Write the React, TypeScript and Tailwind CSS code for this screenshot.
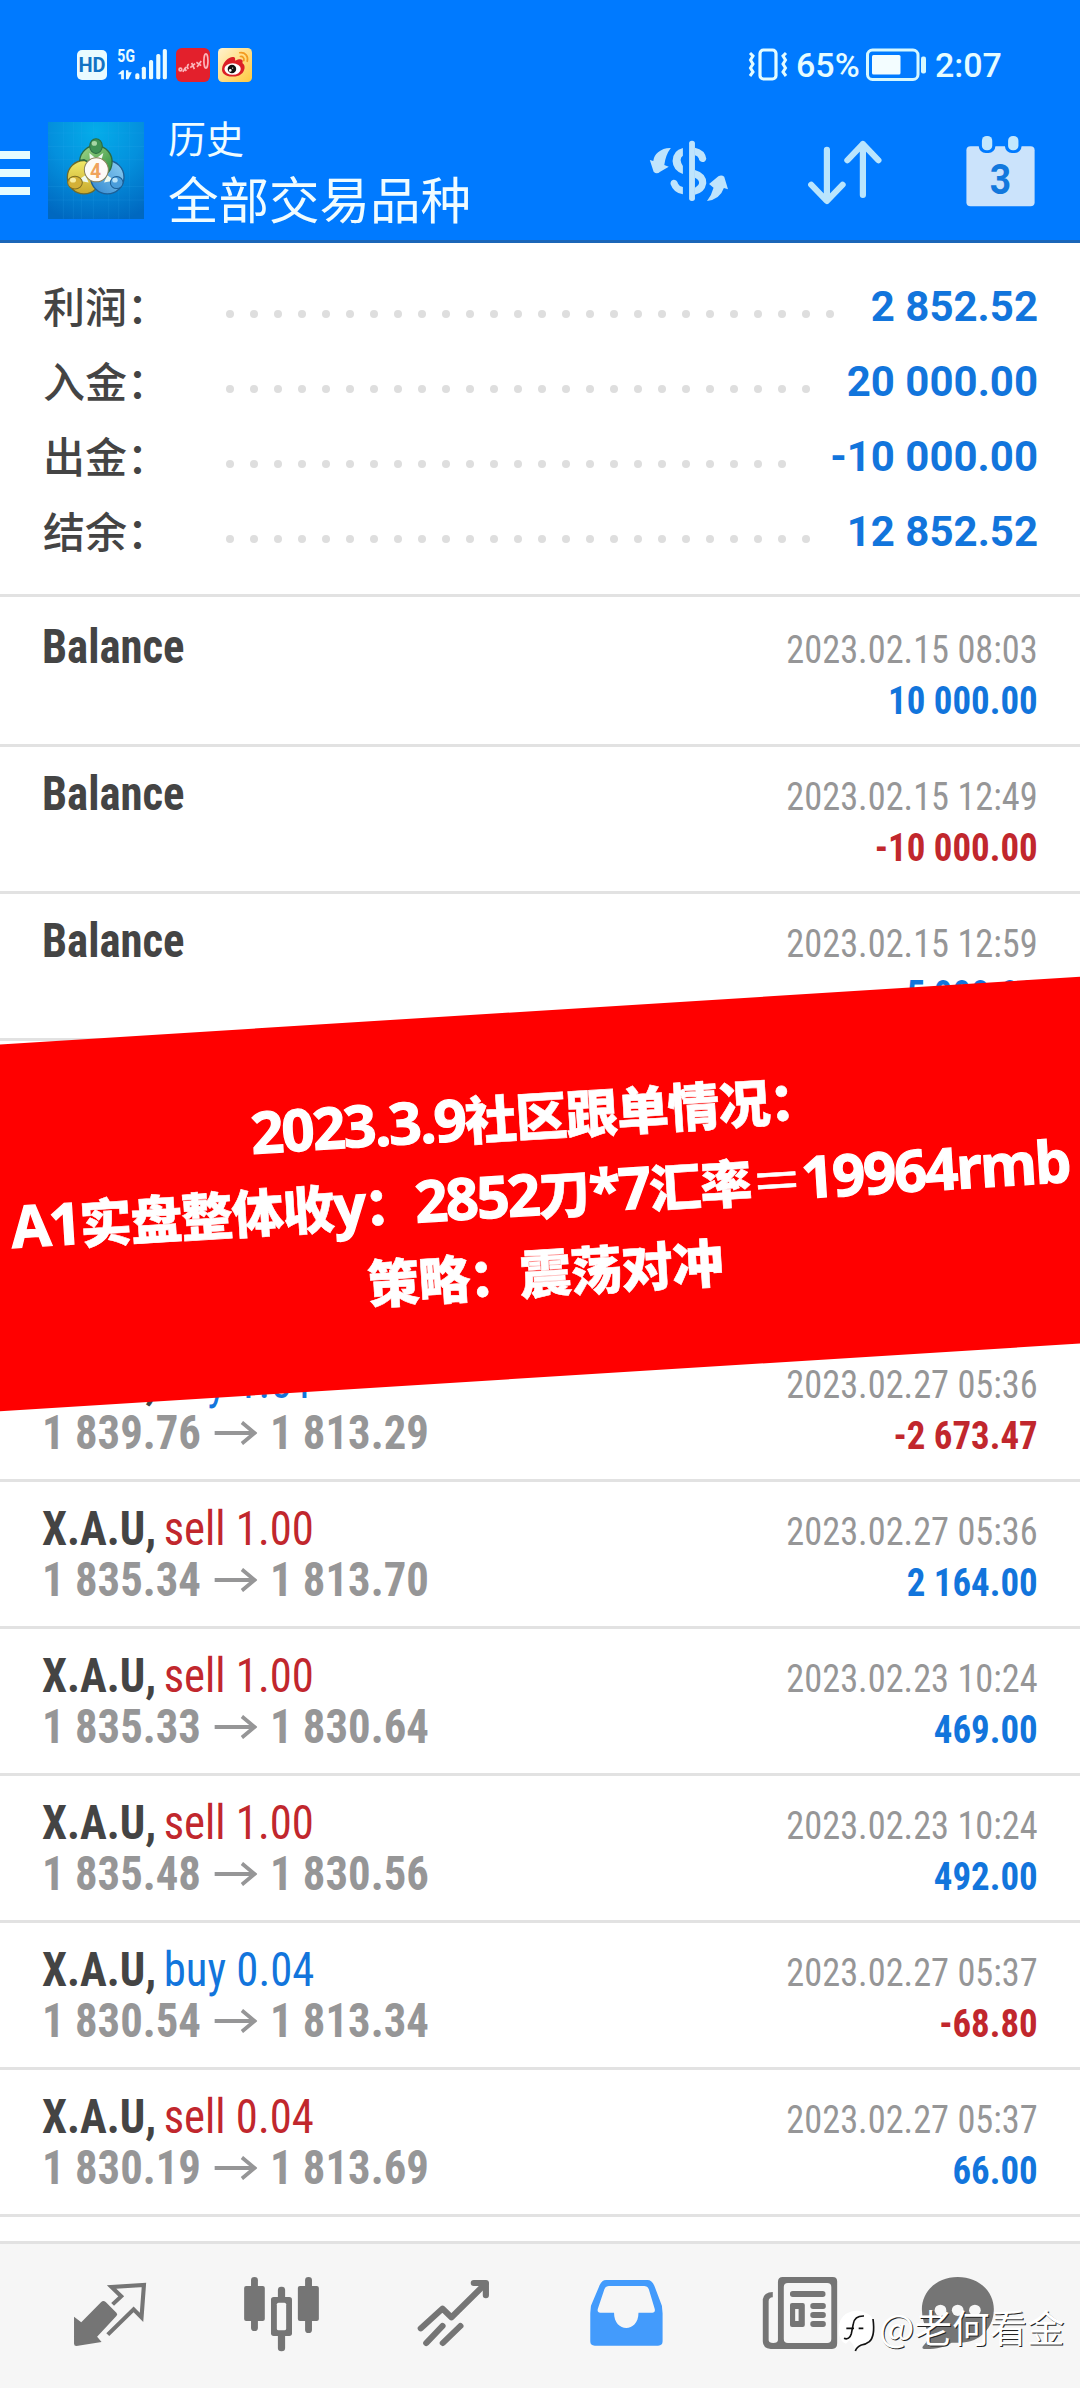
import type { ReactNode } from "react";

type Entry = {
  symbol?: string;
  action?: "buy" | "sell";
  volume?: string;
  open?: string;
  close?: string;
  time: string;
  amount: string;
};

const summary = [
  { label: "利润：", value: "2 852.52", dots: 26 },
  { label: "入金：", value: "20 000.00", dots: 25 },
  { label: "出金：", value: "-10 000.00", dots: 24 },
  { label: "结余：", value: "12 852.52", dots: 25 },
];

const entries: Entry[] = [
  { time: "2023.02.15 08:03", amount: "10 000.00" },
  { time: "2023.02.15 12:49", amount: "-10 000.00" },
  { time: "2023.02.15 12:59", amount: "5 000.00" },
  { time: "2023.02.15 13:02", amount: "5 000.00" },
  { time: "2023.02.15 13:05", amount: "10 000.00" },
  { symbol: "X.A.U,", action: "buy", volume: "1.01", open: "1 839.76", close: "1 813.29", time: "2023.02.27 05:36", amount: "-2 673.47" },
  { symbol: "X.A.U,", action: "sell", volume: "1.00", open: "1 835.34", close: "1 813.70", time: "2023.02.27 05:36", amount: "2 164.00" },
  { symbol: "X.A.U,", action: "sell", volume: "1.00", open: "1 835.33", close: "1 830.64", time: "2023.02.23 10:24", amount: "469.00" },
  { symbol: "X.A.U,", action: "sell", volume: "1.00", open: "1 835.48", close: "1 830.56", time: "2023.02.23 10:24", amount: "492.00" },
  { symbol: "X.A.U,", action: "buy", volume: "0.04", open: "1 830.54", close: "1 813.34", time: "2023.02.27 05:37", amount: "-68.80" },
  { symbol: "X.A.U,", action: "sell", volume: "0.04", open: "1 830.19", close: "1 813.69", time: "2023.02.27 05:37", amount: "66.00" },
];

function SignalIcon() {
  return (
    <svg className="ml-[9px] h-[50px] w-[54px]" viewBox="337 30 157 150" preserveAspectRatio="none" fill="#e9fbff">
      <text x="341" y="97" fontSize="54" fontWeight="700" textLength="51" lengthAdjust="spacingAndGlyphs" className="font-[Roboto]">5G</text>
      <path d="M342 133 L355 121 H360 V148 H352 V133 Z M366 121 H373 V127 H383 L373 148 H366 Z" />
      {[[393, 130], [412, 110], [433, 90], [454, 72], [473, 57]].map(([x, y]) => (
        <rect key={x} x={x} y={y} width="12" height={148 - y} rx="5" />
      ))}
    </svg>
  );
}

function StockAppIcon() {
  return (
    <svg className="ml-[6px] h-[34px] w-[34px]" viewBox="0 0 100 100">
      <rect width="100" height="100" rx="17" fill="#e3202c" />
      <g fill="none" stroke="#fbb6bb" strokeWidth="5">
        <circle cx="13" cy="63" r="4" />
        <path d="M20 70 L30 56 M25 58 L30 68 M38 48 Q30 52 36 62 M42 58 L56 46 M46 44 L54 62 M60 42 L74 52 M62 56 L74 38" />
        <ellipse cx="88" cy="38" rx="6" ry="21" />
      </g>
    </svg>
  );
}

function WeiboIcon() {
  return (
    <svg className="ml-[8px] h-[34px] w-[34px]" viewBox="0 0 100 100">
      <defs>
        <linearGradient id="wb" x1="0" y1="0" x2="1" y2="1">
          <stop offset="0" stopColor="#fff3cf" />
          <stop offset="1" stopColor="#ffc93f" />
        </linearGradient>
      </defs>
      <rect width="100" height="100" rx="13" fill="url(#wb)" />
      <path d="M12 60 C14 40 35 22 48 27 C53 30 48 38 52 37 C62 31 76 31 72 43 C71 47 80 48 78 60 C74 82 52 84 42 84 C22 84 10 74 12 60Z" fill="#dc1f26" />
      <ellipse cx="43" cy="62" rx="24" ry="17" fill="#fff" />
      <circle cx="41" cy="62" r="12.500" fill="#111" />
      <circle cx="36" cy="66" r="4" fill="#fff" />
      <circle cx="43" cy="59" r="2" fill="#fff" />
      <g fill="none" stroke="#f39a1f" strokeWidth="5" strokeLinecap="round">
        <path d="M64 14 C80 12 90 24 86 39" />
        <path d="M66 25 C73 24 78 30 76 37" />
      </g>
    </svg>
  );
}

function VibrateIcon() {
  return (
    <svg className="h-[34px] w-[40px]" viewBox="0 0 40 34" fill="none" stroke="#e3fcff" strokeWidth="2.800">
      <rect x="12" y="2" width="16" height="29" rx="3.500" strokeWidth="3.200" />
      <path d="M2 5 L5 8 L2.500 12 L5 16 L2.500 20 L5 24 L2 28" strokeWidth="3" />
      <path d="M38 5 L35 8 L37.500 12 L35 16 L37.500 20 L35 24 L38 28" strokeWidth="3" />
    </svg>
  );
}

function BatteryIcon() {
  return (
    <svg className="h-[34px] w-[61px]" viewBox="0 0 61 34">
      <rect x="1.500" y="2" width="50.500" height="29.500" rx="5" fill="none" stroke="#d6f8ff" strokeWidth="3" />
      <rect x="6" y="7" width="28.500" height="19.500" rx="1.500" fill="#f3fdff" />
      <rect x="55" y="8.500" width="5" height="17" rx="2" fill="#d6f8ff" />
    </svg>
  );
}

function AppLogo() {
  return (
    <svg className="ml-[18px] h-[97px] w-[96px]" viewBox="24 37 288 290" preserveAspectRatio="none">
      <defs>
        <radialGradient id="sky" cx="0.5" cy="0.1" r="0.95">
          <stop offset="0" stopColor="#04adea" />
          <stop offset="0.5" stopColor="#0490dd" />
          <stop offset="1" stopColor="#0068c0" />
        </radialGradient>
        <linearGradient id="gr" x1="0" y1="0" x2="1" y2="1">
          <stop offset="0" stopColor="#a8d98c" />
          <stop offset="1" stopColor="#2c8f3d" />
        </linearGradient>
        <linearGradient id="ye" x1="0" y1="0" x2="0" y2="1">
          <stop offset="0" stopColor="#f2ea6a" />
          <stop offset="1" stopColor="#c9a92b" />
        </linearGradient>
        <linearGradient id="bl" x1="1" y1="0" x2="0" y2="1">
          <stop offset="0" stopColor="#8fd0f2" />
          <stop offset="1" stopColor="#2f86d0" />
        </linearGradient>
      </defs>
      <rect x="24" y="37" width="288" height="290" fill="url(#sky)" />
      <g stroke="#37b4ee" strokeOpacity="0.14" strokeWidth="3">
        {[70, 100, 124, 160, 206, 236, 268].map((x) => <path key={x} d={`M${x} 37V327`} />)}
        {[70, 110, 150, 230, 270].map((y) => <path key={y} d={`M24 ${y}H312`} />)}
      </g>
      <circle cx="132" cy="202" r="50" fill="url(#ye)" stroke="#6b6a2e" strokeWidth="4" />
      <circle cx="202" cy="202" r="50" fill="url(#bl)" stroke="#1d5f96" strokeWidth="4" />
      <path d="M119 152 A48 48 0 1 1 216 160 Q214 180 204 188 L132 150 Z" fill="url(#gr)" stroke="#2c6b42" strokeWidth="4" />
      <path d="M148 130 L168 146 L190 130 L184 152 H150 Z M112 212 L136 196 L146 218 Z M192 218 L202 196 L224 212 Z" fill="#eefaf0" />
      <ellipse cx="168" cy="109" rx="19" ry="22" fill="#3f9254" stroke="#2c6b42" strokeWidth="3" />
      <ellipse cx="163" cy="101" rx="8" ry="7" fill="#a6d6a4" />
      <ellipse cx="105" cy="218" rx="22" ry="19" fill="#d3b037" stroke="#806f22" strokeWidth="3" />
      <ellipse cx="99" cy="211" rx="9" ry="7" fill="#f7eba0" />
      <ellipse cx="230" cy="218" rx="19" ry="18" fill="#4a9ddb" stroke="#1d5f96" strokeWidth="3" />
      <ellipse cx="225" cy="211" rx="8" ry="7" fill="#b9e2f8" />
      <circle cx="169" cy="180" r="36" fill="#fdfaf7" stroke="#8a8058" strokeWidth="3" />
      <text x="167" y="203" textAnchor="middle" fontSize="58" fontWeight="700" fill="#f0a35c" className="font-[Roboto]">4</text>
    </svg>
  );
}

function ExchangeIcon() {
  return (
    <svg className="h-[76px] w-[88px]" viewBox="308 300 255.500 228" preserveAspectRatio="none" fill="#bfe4fc">
      <path d="M383 348 Q362 347 346 361 Q334 371 332 387 L322 384 L333 419 Q342 428 352 419 L377 404 L364 399 Q368 368 383 348Z" />
      <path d="M488 507 Q502 488 507 467 L494 456 L521 433 Q530 428 538 434 L549 472 L537 468 Q526 502 488 507Z" />
      <rect x="436" y="326" width="17" height="181" rx="8" />
      <path d="M418 348 V371 Q405 380 418 402 V426 Q389 415 388 387 Q389 355 418 348Z" />
      <path d="M391 443 Q401 443 404 455 Q408 464 418 465 V487 Q391 483 382 456 Q382 444 391 443Z" />
      <path d="M453 347 Q482 353 486 380 Q483 391 474 390 Q465 389 464 379 Q461 372 453 370Z" />
      <path fillRule="evenodd" d="M453 414 Q487 424 486 454 Q481 483 453 488Z M453 437 V467 Q466 460 465 451 Q464 442 453 437Z" />
    </svg>
  );
}

function SortIcon() {
  return (
    <svg className="ml-[71px] h-[76px] w-[88px]" viewBox="770 300 255.500 228" preserveAspectRatio="none" fill="none" stroke="#b9e5fd" strokeWidth="18" strokeLinecap="round" strokeLinejoin="round">
      <path d="M836.500 353V506 M791 458L836.500 507L882 458" />
      <path d="M941 489V336 M896 385L941 336L986 385" />
    </svg>
  );
}

function CalendarIcon() {
  return (
    <svg className="ml-[72px] h-[76px] w-[72px] shrink-0" viewBox="1236 302 209 228" preserveAspectRatio="none">
      <rect x="1243" y="345" width="198" height="180" rx="12" fill="#cbe3fb" />
      <rect x="1279" y="312" width="48" height="53" rx="20" fill="#007aff" />
      <rect x="1355" y="312" width="48" height="53" rx="20" fill="#007aff" />
      <rect x="1288" y="314" width="30" height="43" rx="14" fill="#c2e7fd" />
      <rect x="1364" y="314" width="30" height="43" rx="14" fill="#c2e7fd" />
      <text x="1342" y="488" textAnchor="middle" fontSize="128" fontWeight="700" fill="#1278dd" textLength="62" lengthAdjust="spacingAndGlyphs" className="font-[Roboto]">3</text>
    </svg>
  );
}

function Header() {
  return (
    <header className="flex h-[243px] flex-col border-b-[3px] border-[#1b66b8] bg-[#007aff]">
      <div className="mt-[40px] flex h-[50px] items-center pr-[80px] pl-[77px]">
        <div className="flex h-[30px] w-[30px] items-center justify-center rounded-[5px] bg-[#e9fbff] font-[Roboto] text-[20px] leading-none font-bold text-[#1273c4]">HD</div>
        <SignalIcon />
        <StockAppIcon />
        <WeiboIcon />
        <div className="ml-auto flex items-center font-[Roboto] text-[34px] leading-none font-medium text-[#e6fcff]">
          <VibrateIcon />
          <span className="ml-[8px] w-[70px]">65%</span>
          <BatteryIcon />
          <span className="ml-[8px] w-[65px]">2:07</span>
        </div>
      </div>
      <div className="mt-[10px] flex h-[140px] items-center">
        <div className="flex w-[30px] flex-col gap-[10px] pt-[6px]">
          <i className="h-[8px] bg-[#e6fcff]" />
          <i className="h-[8px] bg-[#e6fcff]" />
          <i className="h-[8px] bg-[#e6fcff]" />
        </div>
        <AppLogo />
        <div className="ml-[24px] w-[451px] pb-[7px] font-['Noto_Sans_CJK_SC',sans-serif] text-[#f0fcff]">
          <div className="text-[38px] leading-[60px]">历史</div>
          <div className="text-[50.5px] leading-[60px] whitespace-nowrap">全部交易品种</div>
        </div>
        <div className="ml-[26px] flex shrink-0 items-center">
          <ExchangeIcon />
          <SortIcon />
          <CalendarIcon />
        </div>
      </div>
    </header>
  );
}

function Summary() {
  return (
    <section className="flex h-[354px] flex-col border-b-[3px] border-[#e2e2e2] pt-[27px]">
      {summary.map((s) => (
        <div key={s.label} className="flex h-[75px] items-center pr-[42px] pl-[43px]">
          <span className="w-[183px] pb-[6px] font-['Noto_Sans_CJK_SC',sans-serif] text-[42px] leading-[69px] font-medium whitespace-nowrap text-[#444]">{s.label}</span>
          <div className="flex gap-[16px] pt-[12px]">
            {Array.from({ length: s.dots }, (_, i) => <i key={i} className="h-[8px] w-[8px] rounded-full bg-[#dedede]" />)}
          </div>
          <span className="ml-auto pb-[2px] font-[Roboto] text-[42px] font-bold text-[#1275dc]">{s.value}</span>
        </div>
      ))}
    </section>
  );
}

function Row({ e }: { e: Entry }) {
  return (
    <div className="flex h-[147px] justify-between border-b-[3px] border-[#e2e2e2] pt-[21px] pr-[42px] pl-[42px] font-[Roboto] whitespace-nowrap font-stretch-[75%]">
      <div className="origin-left scale-x-[0.932] text-[48px] leading-[51px]">
        {e.symbol ? (
          <>
            <div>
              <span className="font-bold text-[#444]">{e.symbol}</span>{" "}
              <span className={e.action === "buy" ? "-ml-[3px] text-[#1275dc]" : "-ml-[3px] text-[#c1272d]"}>{e.action} {e.volume}</span>
            </div>
            <div className="flex items-center font-bold text-[#969697]">
              <span>{e.open}</span>
              <svg className="mx-[14px] h-[24px] w-[46px]" viewBox="0 0 46 24" fill="none" stroke="#969697" strokeWidth="4">
                <path d="M0 12H43M29.500 1.500L43 12L29.500 22.500" />
              </svg>
              <span>{e.close}</span>
            </div>
          </>
        ) : (
          <div className="font-bold text-[#444]">Balance</div>
        )}
      </div>
      <div className="pt-[4px] text-right text-[39px] leading-[51px]">
        <div className="origin-right scale-x-[0.932] text-[#969697]">{e.time}</div>
        <div className={e.amount.startsWith("-") ? "origin-right scale-x-[0.945] font-bold text-[#c1272d]" : "origin-right scale-x-[0.945] font-bold text-[#1275dc]"}>{e.amount}</div>
      </div>
    </div>
  );
}

function Latin({ children }: { children: ReactNode }) {
  return <span className="font-['Open_Sans'] text-[58px] font-bold tracking-[-2.2px] [-webkit-text-stroke:1.2px_white]">{children}</span>;
}

function Banner() {
  return (
    <div className="absolute top-[1010.600px] -left-[40px] flex h-[366.300px] w-[1160px] rotate-[-3.580deg] flex-col items-center bg-[#ff0000] pt-[64px] font-['Noto_Sans_CJK_SC',sans-serif] text-[52px] leading-[78.500px] font-black tracking-[-1.2px] whitespace-nowrap text-white [-webkit-text-stroke:0.6px_white]">
      <div className="h-[78.500px]"><Latin>2023.3.9</Latin>社区跟单情况：</div>
      <div className="h-[78.500px]">
        <Latin>A1</Latin>实盘整体收<Latin>y</Latin>：<Latin>2852</Latin>刀<Latin>*7</Latin>汇率<span className="font-normal">＝</span><Latin>19964rmb</Latin>
      </div>
      <div className="h-[78.500px]">策略：震荡对冲</div>
    </div>
  );
}

function TabIcon({ x, children }: { x: number; children: ReactNode }) {
  return (
    <svg className="h-[144px] w-[172px]" viewBox={`${x} 192 499.5 432`} preserveAspectRatio="none" fill="#757575">
      {children}
    </svg>
  );
}

function TabBar() {
  return (
    <nav className="relative mt-[24px] flex h-[147px] border-t-[3px] border-[#e2e2e2] bg-[#f6f6f6] pl-[24px]">
      <TabIcon x={69.7}>
        <path d="M215 410 L236 427 L294 366 Q300 360 307 366 L338 398 Q343 403 338 408 L282 470 L295 486 L222 498 Q215 498 215 491Z" />
        <path d="M327 373L352 349L324 321L418 315L411 412L388 388L313 464" fill="none" stroke="#757575" strokeWidth="12" />
      </TabIcon>
      <TabIcon x={569.2}>
        <rect x="729" y="291" width="20" height="162" rx="10" />
        <rect x="709" y="318" width="60" height="105" rx="6" />
        <rect x="886" y="291" width="20" height="168" rx="10" />
        <rect x="865" y="318" width="61" height="105" rx="6" />
        <rect x="807" y="320" width="21" height="194" rx="10" />
        <rect x="787" y="351" width="61" height="117" rx="8" />
        <rect x="804" y="368" width="27" height="83" rx="5" fill="#f6f6f6" />
      </TabIcon>
      <TabIcon x={1068.7}>
        <g fill="none" stroke="#757575" strokeWidth="18" strokeLinecap="round" strokeLinejoin="round">
          <path d="M1222 445L1285 386L1311 412L1410 311" />
          <path d="M1376 309H1411V346" />
          <path d="M1238 489L1285 438M1286 489L1337 438" />
        </g>
      </TabIcon>
      <TabIcon x={0}>
        <path fillRule="evenodd" fill="#439bfc" d="M192 300 H312 Q325 300 332 317 L354 377 L356 400 V484 Q356 497 343 497 H159 Q146 497 146 484 V400 L148 377 L173 316 Q180 300 192 300Z M200 318 Q191 318 187 328 L168 386 Q165 398 175 398 H215 C215 459 286 459 286 398 H326 Q336 398 333 386 L316 328 Q312 318 303 318Z" />
      </TabIcon>
      <TabIcon x={499.5}>
        <path fillRule="evenodd" d="M705 291 H850 Q863 291 863 304 V490 Q863 507 848 507 H670 Q647 505 647 484 V358 Q650 337 676 336 V352 Q664 353 664 364 V481 Q665 489 677 489 Q691 489 691 480 V306 Q691 291 705 291Z M720 309 Q708 309 708 321 V477 Q708 489 720 489 H834 Q846 489 846 477 V321 Q846 309 834 309Z" />
        <rect x="726" y="333" width="103" height="18" rx="8" />
        <path fillRule="evenodd" d="M732 369H763Q769 369 769 375V435Q769 441 763 441H732Q726 441 726 435V375Q726 369 732 369ZM741 387V423H751V387Z" />
        <rect x="785" y="369" width="45" height="18" rx="8" />
        <rect x="785" y="396" width="45" height="18" rx="8" />
        <rect x="785" y="423" width="45" height="18" rx="8" />
      </TabIcon>
      <TabIcon x={999}>
        <path d="M1213 291 C1275 291 1318 335 1318 388 C1318 445 1275 487 1225 488 H1195 C1175 502 1148 508 1115 507 Q1108 506 1112 499 Q1130 480 1131 460 Q1109 430 1109 388 C1109 335 1152 291 1213 291Z" />
        <circle cx="1163" cy="391" r="17" fill="#f6f6f6" />
        <circle cx="1213" cy="391" r="17" fill="#f6f6f6" />
        <circle cx="1263" cy="391" r="17" fill="#f6f6f6" />
      </TabIcon>
      <div className="absolute top-[51px] left-[838px] flex items-center">
        <svg className="mt-[8px] h-[54px] w-[41px]" viewBox="0 0 123 162" fill="none">
          <path d="M4 98 Q-4 50 24 32 Q60 12 98 38 Q114 60 106 92 Q98 122 66 126 L52 140 Q46 122 34 112 L24 122 Q10 118 4 98Z" fill="#fff" />
          <path d="M78 39 Q50 38 46 62 L40 92 Q34 112 18 106 M25 76 H48 M62 76 H76" stroke="#111" strokeWidth="5" />
          <path d="M105 48 Q112 100 94 116 Q84 124 70 126 Q56 132 52 144" stroke="#111" strokeWidth="5" />
        </svg>
        <span className="font-['Noto_Sans_CJK_SC',sans-serif] text-[37.5px] leading-[54px] whitespace-nowrap text-white [text-shadow:1px_1px_0.500px_#222]">@老何看金</span>
      </div>
    </nav>
  );
}

export default function App() {
  return (
    <div className="relative h-[2388px] w-[1080px] overflow-hidden bg-white">
      <Header />
      <Summary />
      <main className="pt-[3px]">
        {entries.map((e, i) => <Row key={i} e={e} />)}
      </main>
      <TabBar />
      <Banner />
    </div>
  );
}
